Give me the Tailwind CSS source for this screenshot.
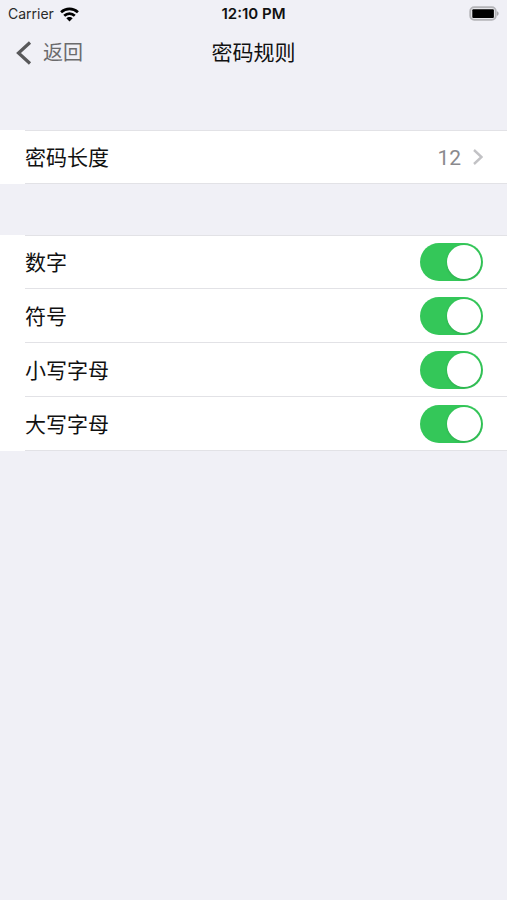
<!DOCTYPE html>
<html lang="zh-CN">
<head>
    <meta charset="UTF-8">
    <meta name="viewport" content="width=device-width, initial-scale=1.0">
    <title>密码规则</title>
    <script src="https://cdn.jsdelivr.net/npm/@tailwindcss/browser@4"></script>
</head>
<body class="min-h-screen bg-[#f0f0f6] text-[#111111] font-['Inter','Noto_Sans_CJK_SC',sans-serif]">
    <!-- status bar -->
    <div class="grid grid-cols-3 items-center h-7 px-2 text-sm leading-5">
        <div class="flex items-center gap-[6px] text-[#2a2a2a]">
            <span>Carrier</span>
            <svg class="w-[19px] h-[15px]" viewBox="0 0 18 14" fill="none" stroke="#000" stroke-width="2.6">
                <path d="M1 4.8C5.6 0.6 12.4 0.6 17 4.8"/>
                <path d="M4 8.2C6.9 5.5 11.1 5.5 14 8.2"/>
                <path d="M6 10.6C7.6 9 10.4 9 12 10.6L9 13.6Z" fill="#000" stroke="none"/>
            </svg>
        </div>
        <div class="text-center text-[15px] font-semibold">12:10 PM</div>
        <svg class="justify-self-end w-[30px] h-4" viewBox="0 0 30 16">
            <rect x="1.2" y="1.2" width="25.6" height="12.6" rx="4" fill="#e6e6ea" stroke="#b4b4b8" stroke-width="1.8"/>
            <rect x="3.3" y="3.2" width="21.6" height="8.8" rx="1" fill="#000"/>
            <path d="M28 5.2C30.2 6 30.2 9 28 9.8Z" fill="#a8a8ac"/>
        </svg>
    </div>

    <header class="grid grid-cols-3 items-center h-12 px-4 pt-[2px] text-[21px] leading-7">
        <a href="#" class="flex items-center gap-[11px] text-[20px] text-[#6b6b6d]">
            <svg class="w-4 h-6" viewBox="0 0 16 24" fill="none" stroke="#58585a" stroke-width="3.2">
                <path d="M14 1.5L2.5 12L14 22.5"/>
            </svg>
            <span>返回</span>
        </a>
        <h1 class="text-center">密码规则</h1>
    </header>

    <main class="pt-[54px] text-[21px] leading-7">
        <section class="bg-white pl-[25px]">
            <a href="#" class="flex items-center h-[54px] pr-6 border-y border-[#e2e2e6]">
                <span class="flex-1 pt-[2px]">密码长度</span>
                <span class="pt-[2px] text-[#8a8a8e] font-['Roboto',sans-serif]">12</span>
                <svg class="ml-3 w-[10px] h-4" viewBox="0 0 10 16" fill="none" stroke="#c2c2c5" stroke-width="2.4">
                    <path d="M1 1L8.5 8L1 15"/>
                </svg>
            </a>
        </section>

        <section class="mt-[51px] bg-white pl-[25px]">
            <div class="flex items-center justify-between h-[54px] pr-6 border-y border-[#e2e2e6]">
                <label for="digits" class="pt-[2px]">数字</label>
                <input id="digits" type="checkbox" checked class="appearance-none flex items-center w-[63px] h-[38px] p-[2px] rounded-full bg-[#d9d9dd] checked:bg-[#34c759] checked:justify-end before:block before:size-[34px] before:rounded-full before:bg-white before:shadow-sm">
            </div>
            <div class="flex items-center justify-between h-[54px] pr-6 border-b border-[#e2e2e6]">
                <label for="symbols" class="pt-[2px]">符号</label>
                <input id="symbols" type="checkbox" checked class="appearance-none flex items-center w-[63px] h-[38px] p-[2px] rounded-full bg-[#d9d9dd] checked:bg-[#34c759] checked:justify-end before:block before:size-[34px] before:rounded-full before:bg-white before:shadow-sm">
            </div>
            <div class="flex items-center justify-between h-[54px] pr-6 border-b border-[#e2e2e6]">
                <label for="lowercase" class="pt-[2px]">小写字母</label>
                <input id="lowercase" type="checkbox" checked class="appearance-none flex items-center w-[63px] h-[38px] p-[2px] rounded-full bg-[#d9d9dd] checked:bg-[#34c759] checked:justify-end before:block before:size-[34px] before:rounded-full before:bg-white before:shadow-sm">
            </div>
            <div class="flex items-center justify-between h-[54px] pr-6 border-b border-[#e2e2e6]">
                <label for="uppercase" class="pt-[2px]">大写字母</label>
                <input id="uppercase" type="checkbox" checked class="appearance-none flex items-center w-[63px] h-[38px] p-[2px] rounded-full bg-[#d9d9dd] checked:bg-[#34c759] checked:justify-end before:block before:size-[34px] before:rounded-full before:bg-white before:shadow-sm">
            </div>
        </section>
    </main>
</body>
</html>
